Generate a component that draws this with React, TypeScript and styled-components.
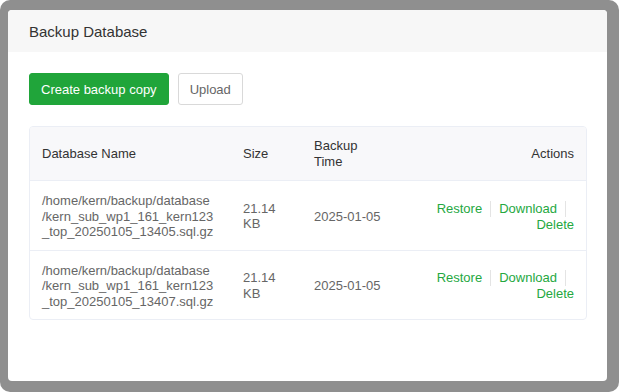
import React from "react";
import styled, { createGlobalStyle } from "styled-components";

const GlobalStyle = createGlobalStyle`
  html, body {
    margin: 0;
    padding: 0;
    background: #fff;
  }
  body {
    font-family: "Liberation Sans", Arial, sans-serif;
    font-size: 13px;
    color: #666;
  }
`;

const Frame = styled.div`
  width: 619px;
  height: 392px;
  box-sizing: border-box;
  background: #8f8f8f;
  border-radius: 10px;
  padding: 10px 12px 11px 8px;
  display: flex;
`;

const Card = styled.div`
  flex: 1;
  background: #fff;
  border-radius: 4px;
  overflow: hidden;
  display: flex;
  flex-direction: column;
`;

const CardHeader = styled.div`
  height: 42px;
  background: #f7f7f7;
  display: flex;
  align-items: center;
  padding: 0 21px;
  font-size: 15px;
  color: #333;
`;

const CardBody = styled.div`
  padding: 21px 20px 0 21px;
  display: flex;
  flex-direction: column;
  gap: 21px;
`;

const Toolbar = styled.div`
  display: flex;
  gap: 9px;
`;

const Button = styled.button<{ $primary?: boolean }>`
  height: 32px;
  box-sizing: border-box;
  padding: 0 11px;
  border-radius: 3px;
  font-family: inherit;
  font-size: 13px;
  cursor: pointer;
  border: 1px solid ${(p) => (p.$primary ? "#20a53a" : "#d9d9d9")};
  background: ${(p) => (p.$primary ? "#20a53a" : "#fff")};
  color: ${(p) => (p.$primary ? "#fff" : "#666")};
`;

const TableWrap = styled.div`
  border: 1px solid #ebeef5;
  border-radius: 4px;
  overflow: hidden;
`;

const Table = styled.table`
  width: 100%;
  border-collapse: collapse;
  table-layout: fixed;
`;

const Th = styled.th<{ $right?: boolean }>`
  background: #f8f8fa;
  color: #333;
  font-weight: normal;
  text-align: ${(p) => (p.$right ? "right" : "left")};
  padding: 11px 12px;
  line-height: 15.5px;
  vertical-align: middle;
`;

const Tr = styled.tr`
  border-top: 1px solid #ebeef5;
`;

const Td = styled.td<{ $right?: boolean; $breakAll?: boolean }>`
  padding: 12px ${(p) => (p.$breakAll ? "16px" : "12px")} 10px 12px;
  line-height: 15.5px;
  color: #666;
  text-align: ${(p) => (p.$right ? "right" : "left")};
  vertical-align: middle;
  word-break: ${(p) => (p.$breakAll ? "break-all" : "normal")};
`;

const PathPart = styled.span`
  display: block;
`;

const Actions = styled.div`
  margin-left: auto;
  max-width: 150px;
  text-align: right;
`;

const ActionLink = styled.a`
  color: #25a83f;
  text-decoration: none;
  cursor: pointer;
`;

const Sep = styled.span`
  display: inline-block;
  width: 1px;
  height: 16px;
  background: #e4e4e4;
  margin: 0 8px;
  vertical-align: -4px;
`;

const backups = [
  {
    name: "/home/kern/backup/database/kern_sub_wp1_161_kern123_top_20250105_13405.sql.gz",
    size: "21.14 KB",
    time: "2025-01-05",
  },
  {
    name: "/home/kern/backup/database/kern_sub_wp1_161_kern123_top_20250105_13407.sql.gz",
    size: "21.14 KB",
    time: "2025-01-05",
  },
];

function FilePath({ path }: { path: string }) {
  const i = path.lastIndexOf("/");
  return (
    <>
      <PathPart>{path.slice(0, i)}</PathPart>
      <PathPart>{path.slice(i)}</PathPart>
    </>
  );
}

export default function App() {
  return (
    <>
      <GlobalStyle />
      <Frame>
        <Card>
          <CardHeader>Backup Database</CardHeader>
          <CardBody>
            <Toolbar>
              <Button $primary>Create backup copy</Button>
              <Button>Upload</Button>
            </Toolbar>
            <TableWrap>
              <Table>
                <colgroup>
                  <col style={{ width: 201 }} />
                  <col style={{ width: 71 }} />
                  <col style={{ width: 94 }} />
                  <col />
                </colgroup>
                <thead>
                  <tr>
                    <Th>Database Name</Th>
                    <Th>Size</Th>
                    <Th>Backup Time</Th>
                    <Th $right>Actions</Th>
                  </tr>
                </thead>
                <tbody>
                  {backups.map((b) => (
                    <Tr key={b.name}>
                      <Td $breakAll>
                        <FilePath path={b.name} />
                      </Td>
                      <Td>{b.size}</Td>
                      <Td>{b.time}</Td>
                      <Td $right>
                        <Actions>
                          <ActionLink>Restore</ActionLink>
                          <Sep />
                          <ActionLink>Download</ActionLink>
                          <Sep />
                          <ActionLink>Delete</ActionLink>
                        </Actions>
                      </Td>
                    </Tr>
                  ))}
                </tbody>
              </Table>
            </TableWrap>
          </CardBody>
        </Card>
      </Frame>
    </>
  );
}
